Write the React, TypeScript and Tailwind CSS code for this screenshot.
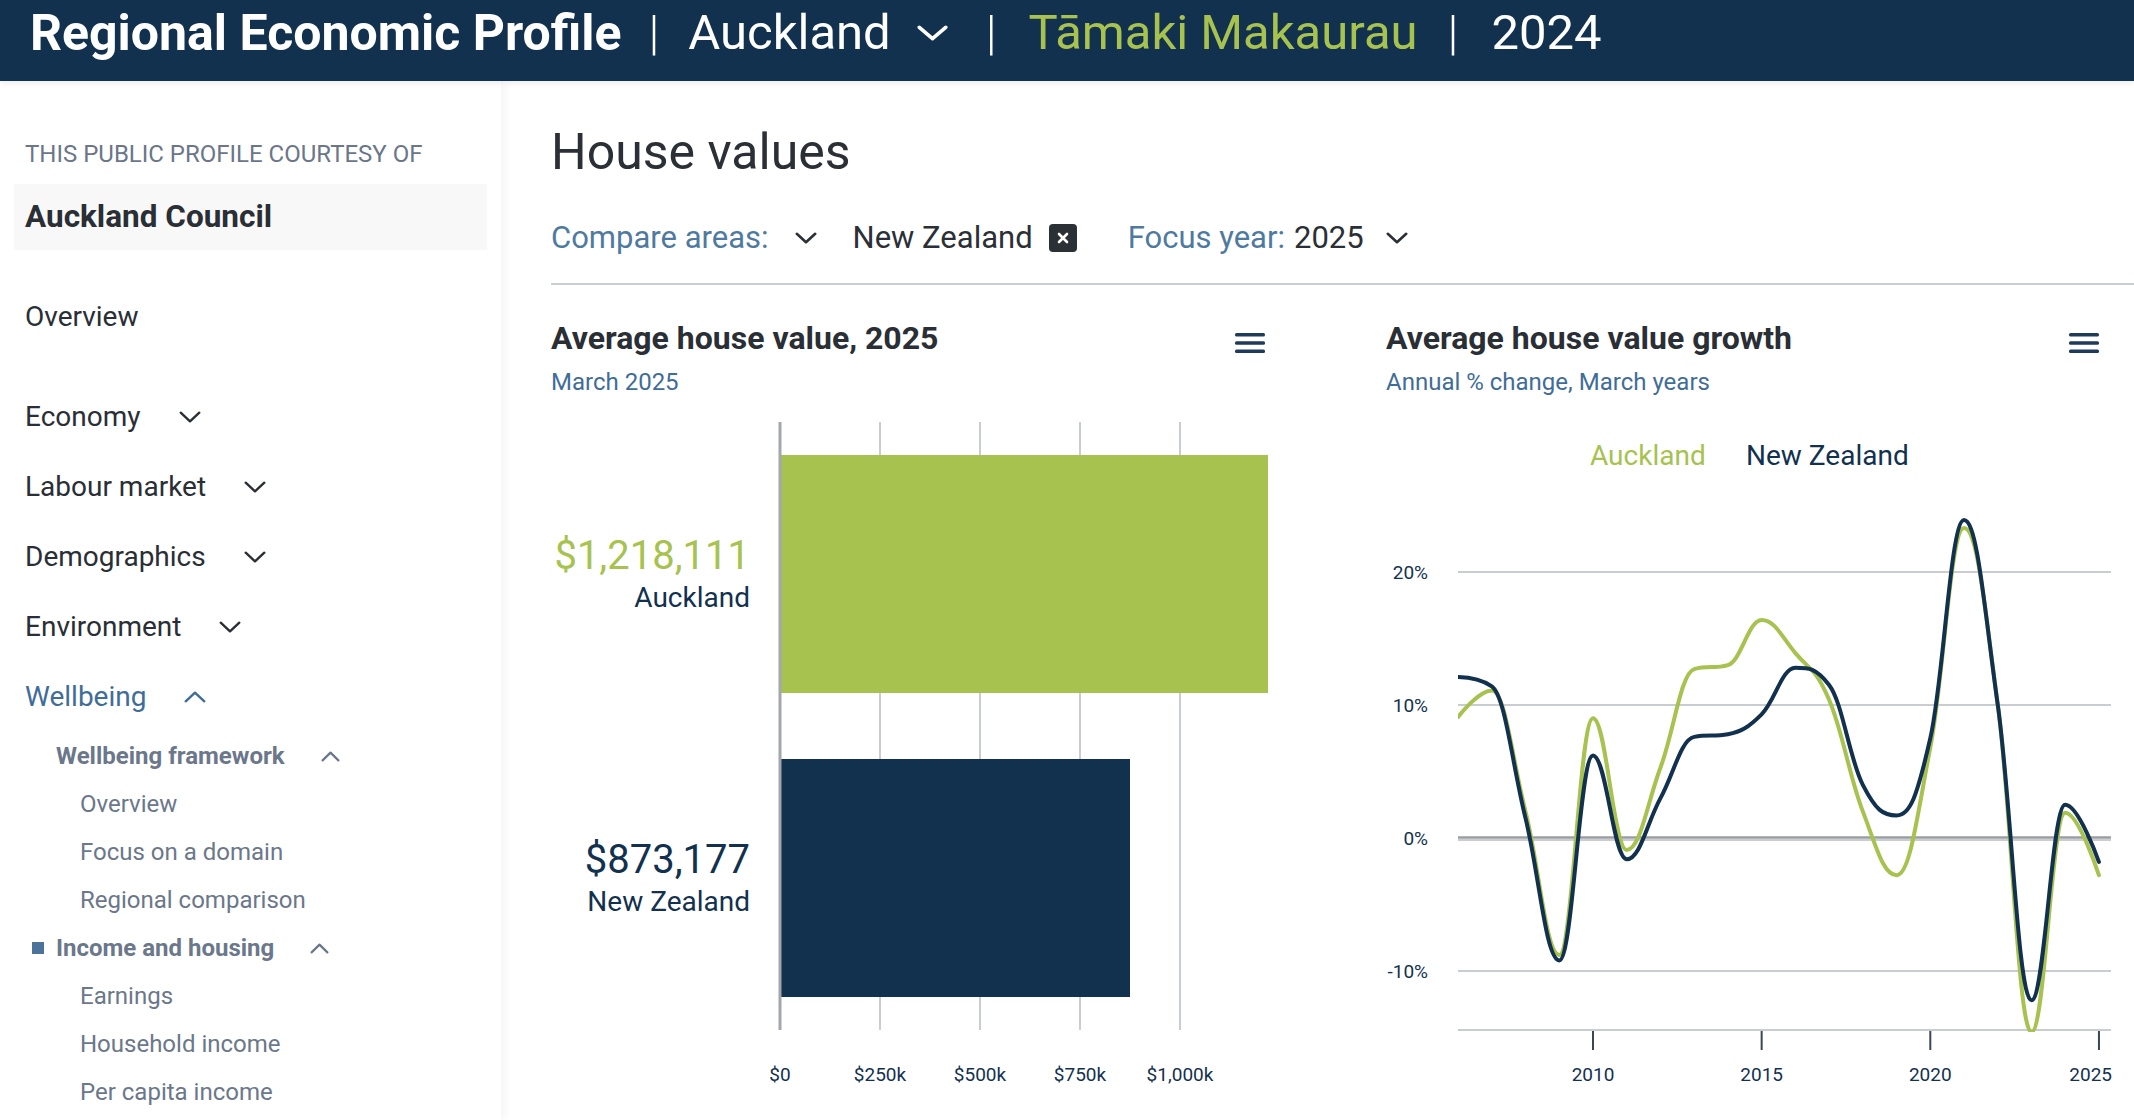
import React from 'react'

const NAVY = '#12314f'
const GREEN = '#a7c24f'

function ChevronDown({ w = 22, h = 12, sw = 2.4 }: { w?: number; h?: number; sw?: number }) {
  return (
    <svg width={w} height={h} viewBox={`0 0 ${w} ${h}`} className="shrink-0">
      <polyline
        points={`${sw / 2 + 0.5},${sw / 2 + 0.5} ${w / 2},${h - sw / 2 - 0.5} ${w - sw / 2 - 0.5},${sw / 2 + 0.5}`}
        fill="none"
        stroke="currentColor"
        strokeWidth={sw}
        strokeLinecap="round"
        strokeLinejoin="round"
      />
    </svg>
  )
}

function ChevronUp({ w = 22, h = 12, sw = 2.4 }: { w?: number; h?: number; sw?: number }) {
  return (
    <svg width={w} height={h} viewBox={`0 0 ${w} ${h}`} className="shrink-0">
      <polyline
        points={`${sw / 2 + 0.5},${h - sw / 2 - 0.5} ${w / 2},${sw / 2 + 0.5} ${w - sw / 2 - 0.5},${h - sw / 2 - 0.5}`}
        fill="none"
        stroke="currentColor"
        strokeWidth={sw}
        strokeLinecap="round"
        strokeLinejoin="round"
      />
    </svg>
  )
}

function Hamburger() {
  return (
    <svg width="30" height="22" viewBox="0 0 30 22" className="text-[#1f3b5b]">
      <rect x="0" y="1" width="30" height="3.5" rx="1.5" fill="currentColor" />
      <rect x="0" y="9.25" width="30" height="3.5" rx="1.5" fill="currentColor" />
      <rect x="0" y="17.5" width="30" height="3.5" rx="1.5" fill="currentColor" />
    </svg>
  )
}

// highcharts-style spline
function splinePath(pts: [number, number][]) {
  const s = 1.5
  const d = s + 1
  const conts = pts.map((p, i) => {
    const prev = pts[i - 1]
    const next = pts[i + 1]
    if (!prev || !next) return { l: p, r: p }
    const lx = (s * p[0] + prev[0]) / d
    let ly = (s * p[1] + prev[1]) / d
    const rx = (s * p[0] + next[0]) / d
    let ry = (s * p[1] + next[1]) / d
    const corr = ((ry - ly) * (rx - p[0])) / (rx - lx) + p[1] - ry
    ly += corr
    ry += corr
    if (ly > prev[1] && ly > p[1]) {
      ly = Math.max(prev[1], p[1])
      ry = 2 * p[1] - ly
    } else if (ly < prev[1] && ly < p[1]) {
      ly = Math.min(prev[1], p[1])
      ry = 2 * p[1] - ly
    }
    if (ry > next[1] && ry > p[1]) {
      ry = Math.max(next[1], p[1])
      ly = 2 * p[1] - ry
    } else if (ry < next[1] && ry < p[1]) {
      ry = Math.min(next[1], p[1])
      ly = 2 * p[1] - ry
    }
    return { l: [lx, ly] as [number, number], r: [rx, ry] as [number, number] }
  })
  let path = `M${pts[0][0]},${pts[0][1]}`
  for (let i = 1; i < pts.length; i++) {
    const a = conts[i - 1].r
    const b = conts[i].l
    const p = pts[i]
    path += ` C${a[0].toFixed(1)},${a[1].toFixed(1)} ${b[0].toFixed(1)},${b[1].toFixed(1)} ${p[0].toFixed(1)},${p[1].toFixed(1)}`
  }
  return path
}

const NZ = [12.1, 11.4, 1.5, -9.2, 6.2, -1.6, 3.0, 7.6, 7.8, 9.3, 12.8, 11.5, 4.0, 1.7, 7.5, 23.9, 10.0, -12.2, 2.5, -1.8]
const AKL = [9.1, 11.1, 2.0, -8.8, 9.0, -0.9, 5.3, 12.7, 13.0, 16.4, 13.9, 10.4, 2.0, -2.8, 6.8, 23.3, 10.0, -14.6, 1.9, -2.8]

const xYear = (y: number) => 207 + (y - 2010) * 33.73
const yVal = (v: number) => 438 - v * 13.3

function BarChart() {
  const bars = [
    { value: '$1,218,111', name: 'Auckland', w: 487, y: 55, color: GREEN, labelColor: GREEN },
    { value: '$873,177', name: 'New Zealand', w: 349, y: 359, color: NAVY, labelColor: NAVY },
  ]
  const ticks = ['$0', '$250k', '$500k', '$750k', '$1,000k']
  return (
    <svg width="740" height="700" className="block font-['Roboto',sans-serif]">
      {[1, 2, 3, 4].map(i => (
        <line key={i} x1={229 + i * 100} x2={229 + i * 100} y1="22" y2="630" stroke="#c9ccd1" strokeWidth="2" />
      ))}
      {bars.map(b => (
        <g key={b.name}>
          <rect x="230" y={b.y} width={b.w} height="238" fill={b.color} />
          <text x="199" y={b.y + 100} textAnchor="end" dominantBaseline="central" fontSize="40" fill={b.labelColor}>
            {b.value}
          </text>
          <text x="199" y={b.y + 142} textAnchor="end" dominantBaseline="central" fontSize="28" fill={NAVY}>
            {b.name}
          </text>
        </g>
      ))}
      <line x1="229" x2="229" y1="22" y2="630" stroke="#a3a6ab" strokeWidth="3" />
      {ticks.map((t, i) => (
        <text key={t} x={229 + i * 100} y="674" textAnchor="middle" dominantBaseline="central" fontSize="19" fill={NAVY}>
          {t}
        </text>
      ))}
    </svg>
  )
}

function LineChart() {
  const years = NZ.map((_, i) => 2006 + i)
  const nzPts = years.map((y, i) => [xYear(y), yVal(NZ[i])] as [number, number])
  const aklPts = years.map((y, i) => [xYear(y), yVal(AKL[i])] as [number, number])
  const grid = [
    { v: 20, label: '20%' },
    { v: 10, label: '10%' },
    { v: -10, label: '-10%' },
  ]
  return (
    <svg width="748" height="700" className="block font-['Roboto',sans-serif]">
      <defs>
        <clipPath id="plot">
          <rect x="72" y="0" width="653" height="632" />
        </clipPath>
      </defs>
      <text x="204" y="55" dominantBaseline="central" fontSize="28" fill={GREEN}>
        Auckland
      </text>
      <text x="360" y="55" dominantBaseline="central" fontSize="28" fill={NAVY}>
        New Zealand
      </text>
      {grid.map(g => (
        <g key={g.v}>
          <line x1="72" x2="725" y1={yVal(g.v)} y2={yVal(g.v)} stroke="#c9ccd1" strokeWidth="2" />
          <text x="42" y={yVal(g.v)} textAnchor="end" dominantBaseline="central" fontSize="19" fill={NAVY}>
            {g.label}
          </text>
        </g>
      ))}
      <line x1="72" x2="725" y1="440" y2="440" stroke="#c9ccd1" strokeWidth="2" />
      <line x1="72" x2="725" y1="437.5" y2="437.5" stroke="#9a9da1" strokeWidth="2.5" />
      <text x="42" y="438" textAnchor="end" dominantBaseline="central" fontSize="19" fill={NAVY}>
        0%
      </text>
      <line x1="72" x2="725" y1="630" y2="630" stroke="#c9ccd1" strokeWidth="2" />
      {[2010, 2015, 2020, 2025].map(y => (
        <g key={y}>
          <line x1={xYear(y)} x2={xYear(y)} y1="631" y2="650" stroke="#3a4654" strokeWidth="2" />
          <text
            x={y === 2025 ? 726 : xYear(y)}
            y="674"
            textAnchor={y === 2025 ? 'end' : 'middle'}
            dominantBaseline="central"
            fontSize="19"
            fill={NAVY}
          >
            {y}
          </text>
        </g>
      ))}
      <g clipPath="url(#plot)" fill="none" strokeWidth="4" strokeLinecap="round" strokeLinejoin="round">
        <path d={splinePath(aklPts)} stroke={GREEN} />
        <path d={splinePath(nzPts)} stroke={NAVY} />
      </g>
    </svg>
  )
}

function NavItem({ label, open, active }: { label: string; open?: boolean; active?: boolean }) {
  return (
    <div className={`h-[70px] flex items-center pl-[25px] text-[28px] ${active ? 'text-[#3f6d98]' : 'text-[#2a2e35]'}`}>
      <span>{label}</span>
      <span className="ml-[38px] flex items-center">{open ? <ChevronUp /> : <ChevronDown />}</span>
    </div>
  )
}

function SubHeading({ label, marker }: { label: string; marker?: boolean }) {
  return (
    <div className="h-[48px] flex items-center text-[24px] font-bold text-[#6b778a] relative pl-[56px]">
      {marker && <span className="absolute left-[32px] top-[18px] w-[12px] h-[12px] bg-[#4c7399]" />}
      <span>{label}</span>
      <span className="ml-[36px] flex items-center text-[#6b778a]">
        <ChevronUp w={19} h={11} sw={2.2} />
      </span>
    </div>
  )
}

function SubItem({ label }: { label: string }) {
  return <div className="h-[48px] flex items-center pl-[80px] text-[24px] text-[#6b778a]">{label}</div>
}

export default function App() {
  return (
    <div className="w-[2134px] h-[1120px] overflow-hidden bg-white font-['Roboto',sans-serif] flex flex-col">
      {/* Header */}
      <header className="h-[81px] shrink-0 bg-[#12314f] flex items-center pl-[30px] pb-[16px] text-[49px] leading-none text-white shadow-[0_2px_6px_rgba(0,0,0,0.08)] relative z-10">
        <span className="font-bold text-[50px]">Regional Economic Profile</span>
        <span className="ml-[27px] mr-[29px] font-light">|</span>
        <span>Auckland</span>
        <span className="ml-[26px] mr-[38px] flex items-center">
          <ChevronDown w={31} h={16} sw={3.6} />
        </span>
        <span className="mr-[32px] font-light">|</span>
        <span className="text-[#a7c24f]">Tāmaki Makaurau</span>
        <span className="ml-[30px] mr-[33px] font-light">|</span>
        <span>2024</span>
      </header>

      <div className="flex flex-1 min-h-0">
        {/* Sidebar */}
        <aside className="w-[501px] shrink-0 bg-white shadow-[3px_0_10px_rgba(0,0,0,0.05)] relative z-[5]">
          <div className="pt-[60px] pl-[25px] text-[24px] leading-[26px] uppercase text-[#6b7689]">
            This public profile courtesy of
          </div>
          <div className="mt-[17px] mx-[14px] h-[66px] bg-[#f8f8f8] flex items-center px-[11px] text-[31.5px] font-bold text-[#2a2e35]">
            Auckland Council
          </div>
          <div className="mt-[32px] h-[70px] flex items-center pl-[25px] text-[28px] text-[#2a2e35]">Overview</div>
          <div className="h-[30px]" />
          <NavItem label="Economy" />
          <NavItem label="Labour market" />
          <NavItem label="Demographics" />
          <NavItem label="Environment" />
          <NavItem label="Wellbeing" open active />
          <SubHeading label="Wellbeing framework" />
          <SubItem label="Overview" />
          <SubItem label="Focus on a domain" />
          <SubItem label="Regional comparison" />
          <SubHeading label="Income and housing" marker />
          <SubItem label="Earnings" />
          <SubItem label="Household income" />
          <SubItem label="Per capita income" />
        </aside>

        {/* Main */}
        <main className="flex-1 min-w-0 pl-[50px] bg-white">
          <h1 className="pt-[46px] text-[50px] leading-[50px] text-[#2b2f36]">House values</h1>

          <div className="mt-[36px] h-[50px] flex items-center text-[31px]">
            <span className="text-[#4f7aa0]">Compare areas:</span>
            <span className="ml-[26px] text-[#2b2f36] flex items-center">
              <ChevronDown w={22} h={12} sw={2.6} />
            </span>
            <span className="ml-[36px] text-[#2b2f36]">New Zealand</span>
            <span className="ml-[16px] w-[28px] h-[28px] rounded-[4px] bg-[#2b2f36] flex items-center justify-center">
              <svg width="12" height="12" viewBox="0 0 12 12">
                <path d="M2 2 L10 10 M10 2 L2 10" stroke="white" strokeWidth="2.6" strokeLinecap="round" />
              </svg>
            </span>
            <span className="ml-[51px] text-[#4f7aa0]">Focus year:</span>
            <span className="ml-[9px] text-[#2b2f36]">2025</span>
            <span className="ml-[22px] text-[#2b2f36] flex items-center">
              <ChevronDown w={22} h={12} sw={2.6} />
            </span>
          </div>

          <div className="mt-[20px] border-t-2 border-[#c9ced4]" />

          <div className="flex pt-[35px]">
            {/* Left chart */}
            <section className="w-[835px] shrink-0">
              <div className="w-[714px] flex justify-between items-start">
                <div>
                  <h2 className="text-[32px] leading-[36px] font-bold text-[#2a2e35]">Average house value, 2025</h2>
                  <p className="mt-[11px] text-[24px] leading-[30px] text-[#3f6d98]">March 2025</p>
                </div>
                <div className="pt-[12px]">
                  <Hamburger />
                </div>
              </div>
              <div className="mt-[3px]">
                <BarChart />
              </div>
            </section>

            {/* Right chart */}
            <section className="flex-1 min-w-0">
              <div className="w-[713px] flex justify-between items-start">
                <div>
                  <h2 className="text-[32px] leading-[36px] font-bold text-[#2a2e35]">Average house value growth</h2>
                  <p className="mt-[11px] text-[24px] leading-[30px] text-[#3f6d98]">Annual % change, March years</p>
                </div>
                <div className="pt-[12px]">
                  <Hamburger />
                </div>
              </div>
              <div className="mt-[3px]">
                <LineChart />
              </div>
            </section>
          </div>
        </main>
      </div>
    </div>
  )
}
